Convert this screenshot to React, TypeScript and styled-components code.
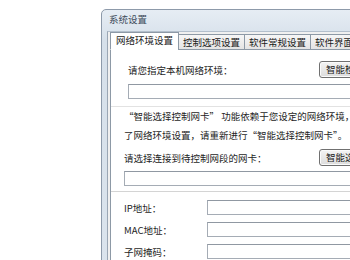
import styled, { createGlobalStyle } from "styled-components";

const GlobalStyle = createGlobalStyle`
  html, body {
    margin: 0;
    padding: 0;
    background: #ffffff;
    overflow: hidden;
  }
  body {
    font-family: "Noto Sans CJK SC", "DejaVu Sans", sans-serif;
  }
`;

const tabs = ["网络环境设置", "控制选项设置", "软件常规设置", "软件界面设置"];

const fields = ["IP地址：", "MAC地址：", "子网掩码："];

export default function App() {
  return (
    <>
      <GlobalStyle />
      <Page>
        <Window>
          <TitleBar>系统设置</TitleBar>
          <Client>
            <TabStrip>
              {tabs.map((t, i) => (
                <Tab key={t} $active={i === 0}>
                  {t}
                </Tab>
              ))}
            </TabStrip>
            <Panel>
              <ActionRow>
                <Label>请您指定本机网络环境：</Label>
                <Button>智能检测</Button>
              </ActionRow>
              <Input $indent={17} $top={6} />
              <Note>
                <div>“智能选择控制网卡” 功能依赖于您设定的网络环境，如果您更改</div>
                <div>了网络环境设置，请重新进行“智能选择控制网卡”。</div>
              </Note>
              <ActionRow $indent={13} $top={4}>
                <Label>请选择连接到待控制网段的网卡：</Label>
                <Button>智能选择</Button>
              </ActionRow>
              <Input $indent={13} $top={5} />
              <FieldGrid>
                {fields.map((f) => (
                  <Field key={f}>
                    <FieldLabel>{f}</FieldLabel>
                    <FieldBox />
                  </Field>
                ))}
              </FieldGrid>
            </Panel>
          </Client>
        </Window>
      </Page>
    </>
  );
}

const Page = styled.div`
  padding: 9px 0 0 101px;
  width: 400px;
`;

const Window = styled.div`
  width: 290px;
  border: 1px solid #8d9aaa;
  border-radius: 5px 5px 0 0;
  background: linear-gradient(#e6edf4, #d6e0ea 30px, #dbe4ed);
  padding: 0 0 0 5px;
`;

const TitleBar = styled.div`
  height: 21px;
  line-height: 18px;
  padding-left: 2px;
  font-size: 9.5px;
  color: #3d4b5a;
`;

const Client = styled.div`
  background: #f0f0f0;
  border-left: 1px solid #9aa6b4;
  border-top: 1px solid #b3bfcc;
  padding: 2px 0 0 2px;
`;

const TabStrip = styled.div`
  display: flex;
  align-items: flex-end;
  height: 16px;
  margin-bottom: -1px;
  position: relative;
  z-index: 1;
`;

const Tab = styled.div<{ $active?: boolean }>`
  height: ${(p) => (p.$active ? 16 : 14)}px;
  line-height: ${(p) => (p.$active ? 15 : 14)}px;
  padding: 0 ${(p) => (p.$active ? 5 : 4)}px;
  margin-left: ${(p) => (p.$active ? 0 : -1)}px;
  font-size: 9.5px;
  color: #1a1a1a;
  white-space: nowrap;
  border: 1px solid #8d99a6;
  border-bottom: ${(p) => (p.$active ? "1px solid #ffffff" : "1px solid #8d99a6")};
  background: ${(p) =>
    p.$active ? "#ffffff" : "linear-gradient(#f6f6f6, #e4e4e4)"};
`;

const Panel = styled.div`
  width: 270px;
  height: 230px;
  background: #ffffff;
  border: 1px solid #8d99a6;
  overflow: hidden;
`;

const ActionRow = styled.div<{ $indent?: number; $top?: number }>`
  display: flex;
  align-items: center;
  justify-content: space-between;
  padding: 0 10px 0 ${(p) => p.$indent ?? 17}px;
  margin-top: ${(p) => p.$top ?? 11}px;
  height: 17px;
`;

const Label = styled.div`
  font-size: 9.5px;
  color: #1e1e1e;
  white-space: nowrap;
`;

const Button = styled.div`
  width: 50px;
  height: 15px;
  line-height: 15px;
  text-align: center;
  font-size: 9.5px;
  color: #1a1a1a;
  border: 1px solid #707070;
  border-radius: 3px;
  background: linear-gradient(#f4f4f4, #dcdcdc);
  box-shadow: inset 0 0 0 1px #fbfbfb;
`;

const Input = styled.div<{ $indent: number; $top?: number }>`
  height: 13px;
  margin: ${(p) => p.$top ?? 5}px 10px 0 ${(p) => p.$indent}px;
  border: 1px solid #a5acb5;
  border-top-color: #9098a2;
  background: #ffffff;
`;

const Note = styled.div`
  margin-top: 7px;
  padding: 0 4px 0 13px;
  font-size: 9.5px;
  line-height: 19px;
  color: #1e1e1e;
  white-space: nowrap;
  border-top: 1px solid #e2e2e2;
`;

const FieldGrid = styled.div`
  margin-top: 5px;
  padding: 8px 10px 0 13px;
  border-top: 1px solid #d4d4d4;
  display: flex;
  flex-direction: column;
  gap: 7px;
`;

const Field = styled.div`
  display: grid;
  grid-template-columns: 83px 1fr;
  align-items: center;
`;

const FieldLabel = styled.div`
  font-size: 9.5px;
  color: #1e1e1e;
  white-space: nowrap;
`;

const FieldBox = styled.div`
  height: 13px;
  border: 1px solid #a5acb5;
  border-top-color: #9098a2;
  background: #ffffff;
`;
